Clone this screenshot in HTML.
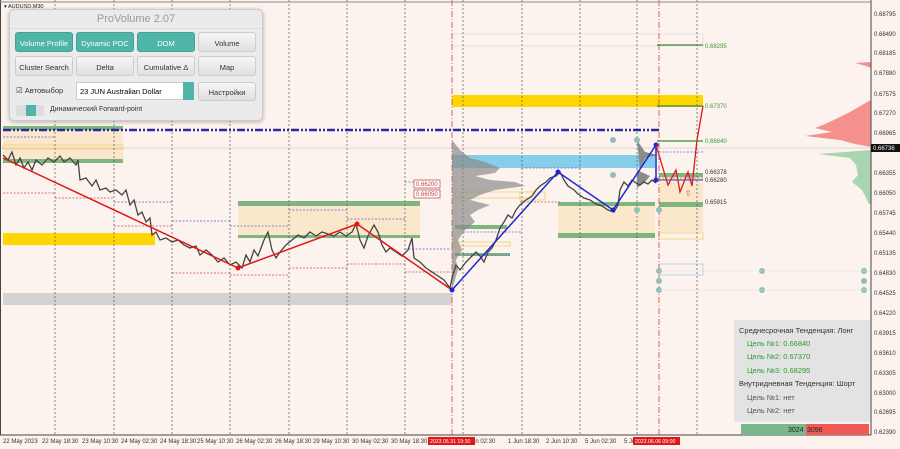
<!DOCTYPE html>
<html><head><meta charset="utf-8"><style>
body{margin:0;width:900px;height:449px;overflow:hidden;background:#fdf3ee;font-family:"Liberation Sans",sans-serif}
svg{position:absolute;left:0;top:0}
.ax{font:6px "Liberation Sans",sans-serif;fill:#333}
.panel{position:absolute;left:9px;top:9px;width:252px;height:110px;background:#ebebeb;border:1px solid #ccc;border-radius:5px;box-shadow:0 1px 4px rgba(0,0,0,.3)}
.ttl{position:absolute;left:0;top:0;width:252px;height:18px;text-align:center;font-size:11px;color:#9a9a9a;line-height:18px;border-bottom:1px solid #ddd}
.b{position:absolute;height:20px;width:58px;border-radius:3px;font-size:7.5px;text-align:center;line-height:22px;color:#333;background:linear-gradient(#f6f6f6,#e0e0e0);border:1px solid #ccc;box-sizing:border-box}
.b.t{background:#4eb5a8;color:#fff;border-color:#45a096}
.info{position:absolute;left:734px;top:320px;width:136px;height:102px;background:rgba(225,225,225,.9);font-size:7.5px;color:#333;border-radius:2px}
.info div{position:absolute;white-space:nowrap}
</style></head><body>
<svg width="900" height="449" viewBox="0 0 900 449">
<rect width="900" height="449" fill="#fdf3ee"/>
<rect x="3" y="130" width="120" height="30" fill="#fbe8cc"/>
<rect x="3" y="126" width="120" height="4" fill="#7fb57f"/>
<rect x="3" y="159" width="120" height="4" fill="#7fb57f"/>
<rect x="3" y="145" width="120" height="4" fill="none" stroke="#f0d060" stroke-width="0.8"/>
<rect x="3" y="233" width="152" height="12" fill="#ffd700"/>
<rect x="3" y="293" width="449" height="12" fill="#d3d3d3"/>
<rect x="238" y="205" width="182" height="30" fill="#fbe8cc"/>
<rect x="238" y="201" width="182" height="5" fill="#7fb57f"/>
<rect x="238" y="235" width="182" height="3" fill="#7fb57f"/>
<rect x="452" y="95" width="251" height="12" fill="#ffd700"/>
<rect x="452" y="34" width="251" height="12" fill="none" stroke="#ddd" stroke-width="0.8"/>
<rect x="452" y="155" width="203" height="13" fill="#87ceeb"/>
<rect x="558" y="205" width="97" height="30" fill="#fbe8cc"/>
<rect x="558" y="202" width="97" height="4" fill="#7fb57f"/>
<rect x="558" y="233" width="97" height="5" fill="#7fb57f"/>
<rect x="659" y="182" width="44" height="50" fill="#fbe8cc"/>
<rect x="659" y="173" width="44" height="4" fill="#7fb57f"/>
<rect x="659" y="202" width="44" height="5" fill="#7fb57f"/>
<rect x="659" y="233" width="44" height="6" fill="none" stroke="#f0d060" stroke-width="0.8"/>
<rect x="520" y="192" width="25" height="8" fill="none" stroke="#f0d060" stroke-width="0.8"/>
<rect x="455" y="192" width="80" height="6" fill="none" stroke="#f0d060" stroke-width="0.8"/>
<rect x="455" y="242" width="55" height="4" fill="none" stroke="#f0d060" stroke-width="0.8"/>
<rect x="455" y="225" width="52" height="4" fill="#7fb57f"/>
<rect x="455" y="253" width="55" height="3" fill="#7fb57f"/>
<rect x="659" y="264" width="44" height="11" fill="none" stroke="#a8d0e0" stroke-width="0.8"/>
<g stroke="#555" stroke-width="0.7" stroke-dasharray="2,2">
<path d="M55 0V435M114 0V435M172 0V435M230 0V435M289 0V435M347 0V435M405 0V435M463 0V435M522 0V435M580 0V435M637 0V435M697 0V435"/>
</g>
<g stroke="#d04040" stroke-width="0.8" stroke-dasharray="6,2,1,2"><path d="M452 0V435M659 0V435"/></g>
<g stroke-width="0.7" stroke-dasharray="2,1.5">
<path stroke="#6060d0" d="M3 137H55M114 202H172M172 221H230M230 226H289M289 210H347M347 219H405M405 249H452M463 232H522M522 168H580M659 152H703M405 182H420M463 255H510"/>
<path stroke="#c05050" d="M3 193H55M55 198H114M114 226H172M172 273H230M230 275H289M289 268H347M347 264H405M405 272H452M520 202H560M659 178H703"/>
</g>
<path d="M0 148H871" stroke="#bbb" stroke-width="0.6"/>
<path d="M3 130H660" stroke="#2a2a9a" stroke-width="2.5" stroke-dasharray="8,2,2,2,2,2"/>
<path d="M452 140 L460 150 L470 158 L485 162 L500 168 L495 173 L475 176 L490 180 L515 182 L525 186 L495 190 L480 195 L470 200 L490 205 L478 210 L470 215 L475 222 L465 230 L458 240 L462 250 L456 260 L458 270 L452 290 Z" fill="#8a8a8a" opacity="0.7"/>
<path d="M637 140 L645 152 L658 155 L645 158 L640 170 Z M637 170 L650 176 L645 182 L637 188 Z" fill="#8a8a8a"/>
<path d="M871 62 L855 63 L866 66 L871 68 L871 100 L862 105 L850 112 L838 118 L825 124 L815 128 L832 132 L805 136 L840 140 L855 144 L871 147 Z" fill="#f5918d"/>
<path d="M871 150 L845 152 L818 154 L850 158 L856 165 L858 175 L852 182 L862 190 L866 198 L869 204 L871 204 Z" fill="#a8d4b0"/>
<polyline fill="none" stroke="#444" stroke-width="1.3" points="3,155 8,160 12,152 16,165 20,158 24,168 28,162 32,170 36,160 42,165 48,158 54,162 60,156 64,162 70,158 76,165 78,160 80,180 86,178 92,186 96,180 100,190 106,188 110,192 116,190 122,195 126,190 130,205 134,200 138,215 142,212 146,222 150,218 152,235 156,232 160,240 166,238 172,242 178,240 184,245 190,248 196,246 200,255 206,250 212,255 218,262 224,258 230,265 236,262 242,268 246,255 250,262 254,250 258,256 264,240 268,232 272,250 276,258 280,252 286,245 292,240 298,235 304,238 310,232 316,236 322,232 328,234 334,236 340,232 346,236 352,232 356,224 360,240 364,248 368,236 374,225 378,232 382,245 386,252 390,248 396,252 402,256 408,250 412,238 414,258 420,262 426,268 432,272 438,276 444,280 450,288 452,278 456,265 460,270 466,262 470,258 476,252 480,256 484,262 488,252 492,248 496,240 500,228 504,222 508,215 512,218 516,210 520,205 526,200 532,196 536,190 540,186 546,182 550,178 556,176 560,172 564,180 568,186 574,190 578,194 584,198 590,200 596,204 602,206 608,210 614,212 618,205 620,190 624,182 628,186 632,180 636,183 640,185 644,182 648,184 652,180 656,183"/>
<polyline fill="none" stroke="#e01818" stroke-width="1.5" points="3,158 238,268 357,224 452,290"/>
<g fill="#e01818"><circle cx="238" cy="268" r="2.5"/><circle cx="357" cy="224" r="2.5"/></g>
<polyline fill="none" stroke="#1a2ad0" stroke-width="1.5" points="452,290 558,172 613,210 656,145 656,180"/>
<g fill="#1a2ad0"><circle cx="452" cy="290" r="2.5"/><circle cx="558" cy="172" r="2.5"/><circle cx="613" cy="210" r="2.5"/><circle cx="656" cy="145" r="2.5"/><circle cx="656" cy="180" r="2.5"/></g>
<polyline fill="none" stroke="#e01818" stroke-width="1.3" points="656,145 668,185 676,170 680,192 688,172 692,186 697,140 703,106"/>
<text x="685" y="196" font-size="8" fill="#e04040">⇧</text>
<g stroke-width="1.2"><path stroke="#3a8a3a" d="M657 45H703M657 106H703M657 141H703"/><path stroke="#555590" d="M657 180H703"/></g>
<g font-size="6" font-family="Liberation Sans"><text x="705" y="48" fill="#3a9a3a">0.68295</text><text x="705" y="108" fill="#3a9a3a">0.67370</text><text x="705" y="143" fill="#3a9a3a">0.66840</text><text x="705" y="174" fill="#333">0.66378</text><text x="705" y="182" fill="#333">0.66280</text><text x="705" y="204" fill="#333">0.65915</text></g>
<g fill="#ffffff" stroke="#c04040" stroke-width="0.7"><rect x="414" y="180" width="26" height="8"/><rect x="414" y="190" width="26" height="8"/></g>
<g font-size="6" fill="#c04040"><text x="416" y="186">0.66200</text><text x="416" y="196">0.66050</text></g>
<g fill="#8fbfb8"><circle cx="613" cy="140" r="3"/><circle cx="637" cy="140" r="3"/><circle cx="613" cy="175" r="3"/><circle cx="637" cy="210" r="3"/><circle cx="659" cy="210" r="3"/><circle cx="659" cy="271" r="3"/><circle cx="659" cy="281" r="3"/><circle cx="659" cy="290" r="3"/><circle cx="762" cy="271" r="3"/><circle cx="864" cy="271" r="3"/><circle cx="762" cy="290" r="3"/><circle cx="864" cy="281" r="3"/><circle cx="864" cy="290" r="3"/></g>
<path d="M659 271H871M659 290H871" stroke="#ddd" stroke-width="0.6"/>
<path d="M871 0V435M0 435H871M0.5 0V435" stroke="#444" stroke-width="1"/>
<path d="M0 2H871" stroke="#888" stroke-width="1"/>
<g class="ax"><text x="874" y="16">0.68795</text><text x="874" y="36">0.68490</text><text x="874" y="55">0.68185</text><text x="874" y="75">0.67880</text><text x="874" y="96">0.67575</text><text x="874" y="115">0.67270</text><text x="874" y="135">0.66965</text><text x="874" y="175">0.66355</text><text x="874" y="195">0.66050</text><text x="874" y="215">0.65745</text><text x="874" y="235">0.65440</text><text x="874" y="255">0.65135</text><text x="874" y="275">0.64830</text><text x="874" y="295">0.64525</text><text x="874" y="315">0.64220</text><text x="874" y="335">0.63915</text><text x="874" y="355">0.63610</text><text x="874" y="375">0.63305</text><text x="874" y="395">0.63000</text><text x="874" y="414">0.62695</text><text x="874" y="434">0.62390</text></g>
<rect x="871" y="144" width="29" height="8" fill="#111"/><text x="873" y="150" font-size="6" fill="#fff">0.66736</text>
<g class="ax" font-size="5.2"><text x="3" y="443">22 May 2023</text><text x="42" y="443">22 May 18:30</text><text x="82" y="443">23 May 10:30</text><text x="121" y="443">24 May 02:30</text><text x="160" y="443">24 May 18:30</text><text x="197" y="443">25 May 10:30</text><text x="236" y="443">26 May 02:30</text><text x="275" y="443">26 May 18:30</text><text x="313" y="443">29 May 10:30</text><text x="352" y="443">30 May 02:30</text><text x="391" y="443">30 May 18:30</text><text x="472" y="443">un 02:30</text><text x="508" y="443">1 Jun 18:30</text><text x="546" y="443">2 Jun 10:30</text><text x="585" y="443">5 Jun 02:30</text><text x="624" y="443">5 Ju</text></g>
<rect x="428" y="437" width="47" height="8" fill="#e01818"/><text x="430" y="443" font-size="5.2" fill="#fff">2023.05.31 19:30</text>
<rect x="633" y="437" width="47" height="8" fill="#e01818"/><text x="635" y="443" font-size="5.2" fill="#fff">2023.06.06 09:00</text>
<text x="4" y="8" font-size="5.5" fill="#222">▾ AUDUSD,M30</text>
<rect x="741" y="424" width="65" height="11" fill="#78b88a"/><rect x="806" y="424" width="63" height="11" fill="#f25a55"/>
<text x="788" y="432" font-size="7" fill="#222">3024</text><text x="807" y="432" font-size="7" fill="#222">3096</text>
</svg>
<div class="panel">
<div class="ttl">ProVolume 2.07</div>
<div class="b t" style="left:5px;top:22px">Volume Profile</div>
<div class="b t" style="left:66px;top:22px">Dynamic POC</div>
<div class="b t" style="left:127px;top:22px">DOM</div>
<div class="b" style="left:188px;top:22px">Volume</div>
<div class="b" style="left:5px;top:46px">Cluster Search</div>
<div class="b" style="left:66px;top:46px">Delta</div>
<div class="b" style="left:127px;top:46px">Cumulative Δ</div>
<div class="b" style="left:188px;top:46px">Map</div>
<div style="position:absolute;left:6px;top:76px;font-size:7.5px;color:#333">☑ Автовыбор</div>
<div style="position:absolute;left:66px;top:72px;width:117px;height:18px;background:#fff;border:1px solid #ccc;font-size:7.5px;line-height:18px;padding-left:3px;box-sizing:border-box">23 JUN Australian Dollar</div>
<div style="position:absolute;left:173px;top:72px;width:11px;height:18px;background:#4eb5a8"></div>
<div class="b" style="left:188px;top:72px;height:19px;line-height:19px">Настройки</div>
<div style="position:absolute;left:6px;top:95px;width:28px;height:11px;background:#ddd;border-radius:2px"><div style="margin-left:10px;width:10px;height:11px;background:#4eb5a8"></div></div>
<div style="position:absolute;left:40px;top:96px;font-size:7px;color:#333">Динамический Forward-point</div>
</div>
<div class="info">
<div style="left:5px;top:6px">Среднесрочная Тенденция: Лонг</div>
<div style="left:13px;top:19px;color:#2e9a2e">Цель №1: 0.66840</div>
<div style="left:13px;top:32px;color:#2e9a2e">Цель №2: 0.67370</div>
<div style="left:13px;top:46px;color:#2e9a2e">Цель №3: 0.68295</div>
<div style="left:5px;top:59px">Внутридневная Тенденция: Шорт</div>
<div style="left:13px;top:73px;color:#555">Цель №1: нет</div>
<div style="left:13px;top:86px;color:#555">Цель №2: нет</div>
</div>
</body></html>
